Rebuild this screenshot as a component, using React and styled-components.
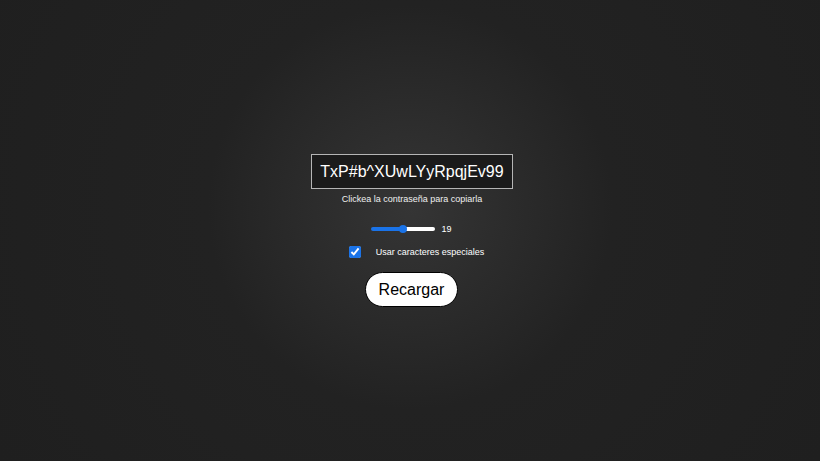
import styled, { createGlobalStyle } from "styled-components"
import { useState } from "react"

const Global = createGlobalStyle`
  html, body {
    margin: 0;
    height: 100%;
  }
  body {
    background: radial-gradient(circle at 50% 45%, #353535 0%, #2b2b2b 22%, #222 42%, #1f1f1f 100%);
    font-family: "Liberation Sans", Arial, sans-serif;
    color: #fff;
  }
  #root {
    height: 100%;
  }
`

const Pagina = styled.main`
  height: 100%;
  display: flex;
  flex-direction: column;
  align-items: center;
  justify-content: center;
`

const Clave = styled.div`
  box-sizing: border-box;
  height: 35px;
  padding: 0 8px;
  margin-left: 4px;
  display: flex;
  align-items: center;
  border: 1px solid #b5b5b5;
  background: #1b1b1b;
  font-size: 16px;
  color: #fff;
  cursor: pointer;
`

const Ayuda = styled.p`
  margin: 5px 0 0 4px;
  height: 10px;
  line-height: 10px;
  font-size: 9px;
  color: #f0f0f0;
`

const Fila = styled.div`
  display: flex;
  align-items: center;
  height: ${(p) => p.$alto || 10}px;
  gap: ${(p) => p.$gap || 0}px;
  margin-top: ${(p) => p.$top || 0}px;
  margin-left: ${(p) => p.$left || 0}px;
  font-size: 9px;
`

const Rango = styled.input`
  -webkit-appearance: none;
  appearance: none;
  width: 64px;
  height: 4px;
  margin: 0;
  border-radius: 2px;
  background: linear-gradient(to right, #1a73e8 0%, #1a73e8 ${(p) => p.$pct}%, #fff ${(p) => p.$pct}%, #fff 100%);
  outline: none;

  &::-webkit-slider-thumb {
    -webkit-appearance: none;
    width: 8px;
    height: 8px;
    border-radius: 50%;
    background: #1a73e8;
    border: none;
  }
`

const Casilla = styled.input`
  width: 12px;
  height: 12px;
  margin: 0;
  accent-color: #1a73e8;
`

const Boton = styled.button`
  box-sizing: border-box;
  margin-top: 14px;
  margin-left: 3px;
  height: 35px;
  padding: 0 13px;
  border: 1px solid #000;
  border-radius: 18px;
  background: #fff;
  color: #000;
  font-family: "Liberation Sans", Arial, sans-serif;
  font-size: 16px;
  cursor: pointer;
`

function App() {
  const [largo, setLargo] = useState(19)
  const [especiales, setEspeciales] = useState(true)
  const pct = ((largo - 6) / (32 - 6)) * 100

  return (
    <Pagina>
      <Global />
      <Clave>TxP#b^XUwLYyRpqjEv99</Clave>
      <Ayuda>Clickea la contraseña para copiarla</Ayuda>
      <Fila $top={20} $gap={6} $left={3}>
        <Rango
          type="range"
          min="6"
          max="32"
          value={largo}
          $pct={pct}
          onChange={(e) => setLargo(Number(e.target.value))}
        />
        <span>{largo}</span>
      </Fila>
      <Fila $top={11} $gap={15} $left={13} $alto={13}>
        <Casilla type="checkbox" checked={especiales} onChange={(e) => setEspeciales(e.target.checked)} />
        <span>Usar caracteres especiales</span>
      </Fila>
      <Boton>Recargar</Boton>
    </Pagina>
  )
}

export default App
